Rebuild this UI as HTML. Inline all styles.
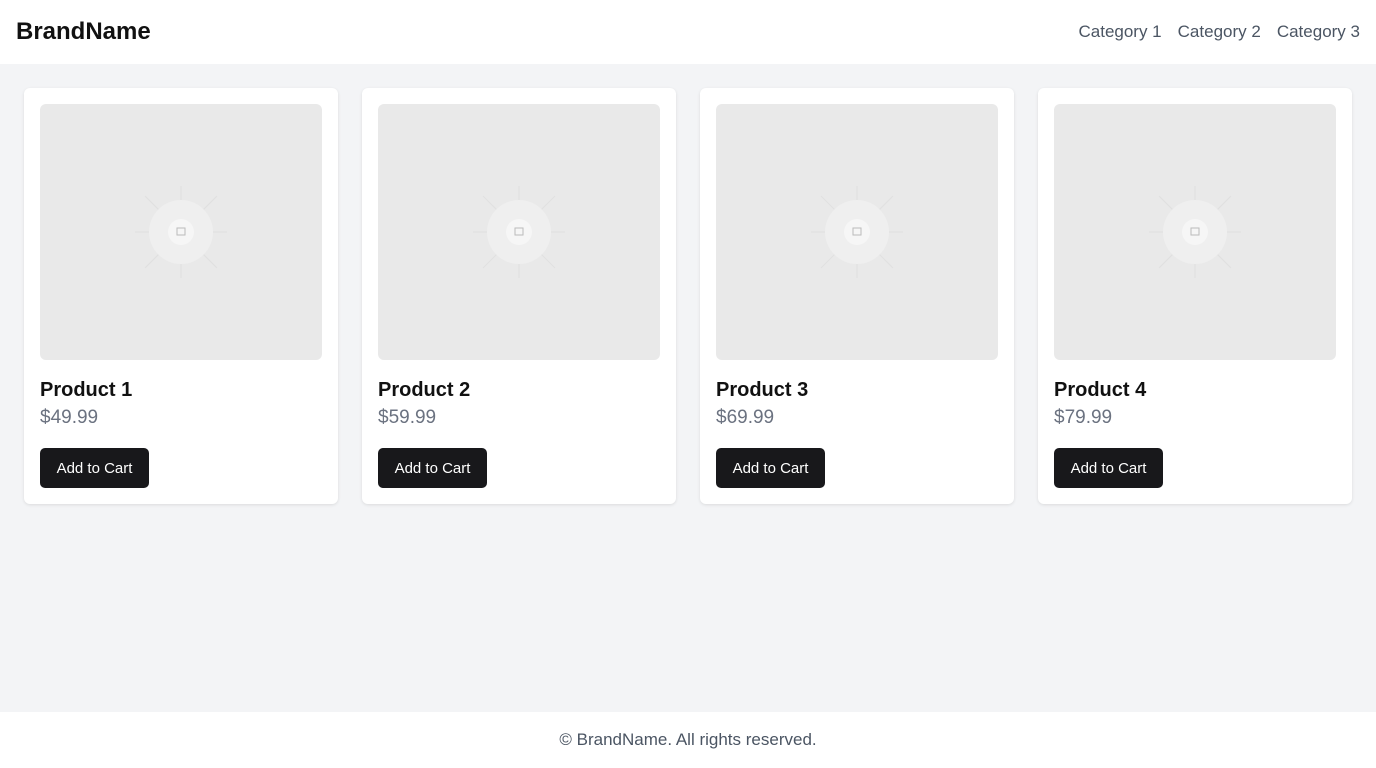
<!DOCTYPE html>
<html><head><style>
*{box-sizing:border-box;margin:0;padding:0}
body{width:1376px;height:768px;background:#f3f4f6;font-family:"Liberation Sans",Arial,sans-serif;position:relative;overflow:hidden}
header{height:64px;background:#fff;display:flex;align-items:center;justify-content:space-between;padding:0 16px}
.brand{font-size:24px;font-weight:bold;color:#111}
nav a{font-size:17px;color:#4b5563;margin-left:16px;text-decoration:none}
.grid{position:absolute;top:88px;left:24px;display:flex;gap:24px}
.card{width:314px;height:416px;background:#fff;border-radius:6px;box-shadow:0 1px 3px rgba(0,0,0,.1);padding:16px;position:relative}
.img{width:282px;height:256px;background:#e9e9e9;border-radius:6px;display:flex;align-items:center;justify-content:center}
h3{position:absolute;top:291px;left:16px;font-size:20px;font-weight:bold;color:#111}
.price{position:absolute;top:319px;left:16px;font-size:19px;color:#6b7280}
.btn{position:absolute;top:360px;left:16px;width:109px;height:40px;background:#18181b;color:#fff;border-radius:5px;font-size:15px;display:flex;align-items:center;justify-content:center}
footer{position:absolute;top:712px;left:0;width:1376px;height:56px;background:#fff;display:flex;align-items:center;justify-content:center;font-size:17px;color:#4b5563}
</style></head><body>
<header><div class="brand">BrandName</div><nav><a>Category 1</a><a>Category 2</a><a>Category 3</a></nav></header>
<div class="grid">
<div class="card"><div class="img"><svg width="100" height="100" viewBox="-50 -50 100 100"><g stroke="#e0e0e0" stroke-width="1"><line x1="0" y1="-46" x2="0" y2="46"/><line x1="-46" y1="0" x2="46" y2="0"/><line x1="-36" y1="-36" x2="36" y2="36"/><line x1="-36" y1="36" x2="36" y2="-36"/></g><circle r="32" fill="#efefef"/><circle r="13" fill="#f6f6f6"/><rect x="-4" y="-4" width="8" height="7" fill="none" stroke="#bbb" stroke-width="1"/></svg></div><h3>Product 1</h3><div class="price">$49.99</div><div class="btn">Add to Cart</div></div>
<div class="card"><div class="img"><svg width="100" height="100" viewBox="-50 -50 100 100"><g stroke="#e0e0e0" stroke-width="1"><line x1="0" y1="-46" x2="0" y2="46"/><line x1="-46" y1="0" x2="46" y2="0"/><line x1="-36" y1="-36" x2="36" y2="36"/><line x1="-36" y1="36" x2="36" y2="-36"/></g><circle r="32" fill="#efefef"/><circle r="13" fill="#f6f6f6"/><rect x="-4" y="-4" width="8" height="7" fill="none" stroke="#bbb" stroke-width="1"/></svg></div><h3>Product 2</h3><div class="price">$59.99</div><div class="btn">Add to Cart</div></div>
<div class="card"><div class="img"><svg width="100" height="100" viewBox="-50 -50 100 100"><g stroke="#e0e0e0" stroke-width="1"><line x1="0" y1="-46" x2="0" y2="46"/><line x1="-46" y1="0" x2="46" y2="0"/><line x1="-36" y1="-36" x2="36" y2="36"/><line x1="-36" y1="36" x2="36" y2="-36"/></g><circle r="32" fill="#efefef"/><circle r="13" fill="#f6f6f6"/><rect x="-4" y="-4" width="8" height="7" fill="none" stroke="#bbb" stroke-width="1"/></svg></div><h3>Product 3</h3><div class="price">$69.99</div><div class="btn">Add to Cart</div></div>
<div class="card"><div class="img"><svg width="100" height="100" viewBox="-50 -50 100 100"><g stroke="#e0e0e0" stroke-width="1"><line x1="0" y1="-46" x2="0" y2="46"/><line x1="-46" y1="0" x2="46" y2="0"/><line x1="-36" y1="-36" x2="36" y2="36"/><line x1="-36" y1="36" x2="36" y2="-36"/></g><circle r="32" fill="#efefef"/><circle r="13" fill="#f6f6f6"/><rect x="-4" y="-4" width="8" height="7" fill="none" stroke="#bbb" stroke-width="1"/></svg></div><h3>Product 4</h3><div class="price">$79.99</div><div class="btn">Add to Cart</div></div>
</div>
<footer>© BrandName. All rights reserved.</footer>
</body></html>
